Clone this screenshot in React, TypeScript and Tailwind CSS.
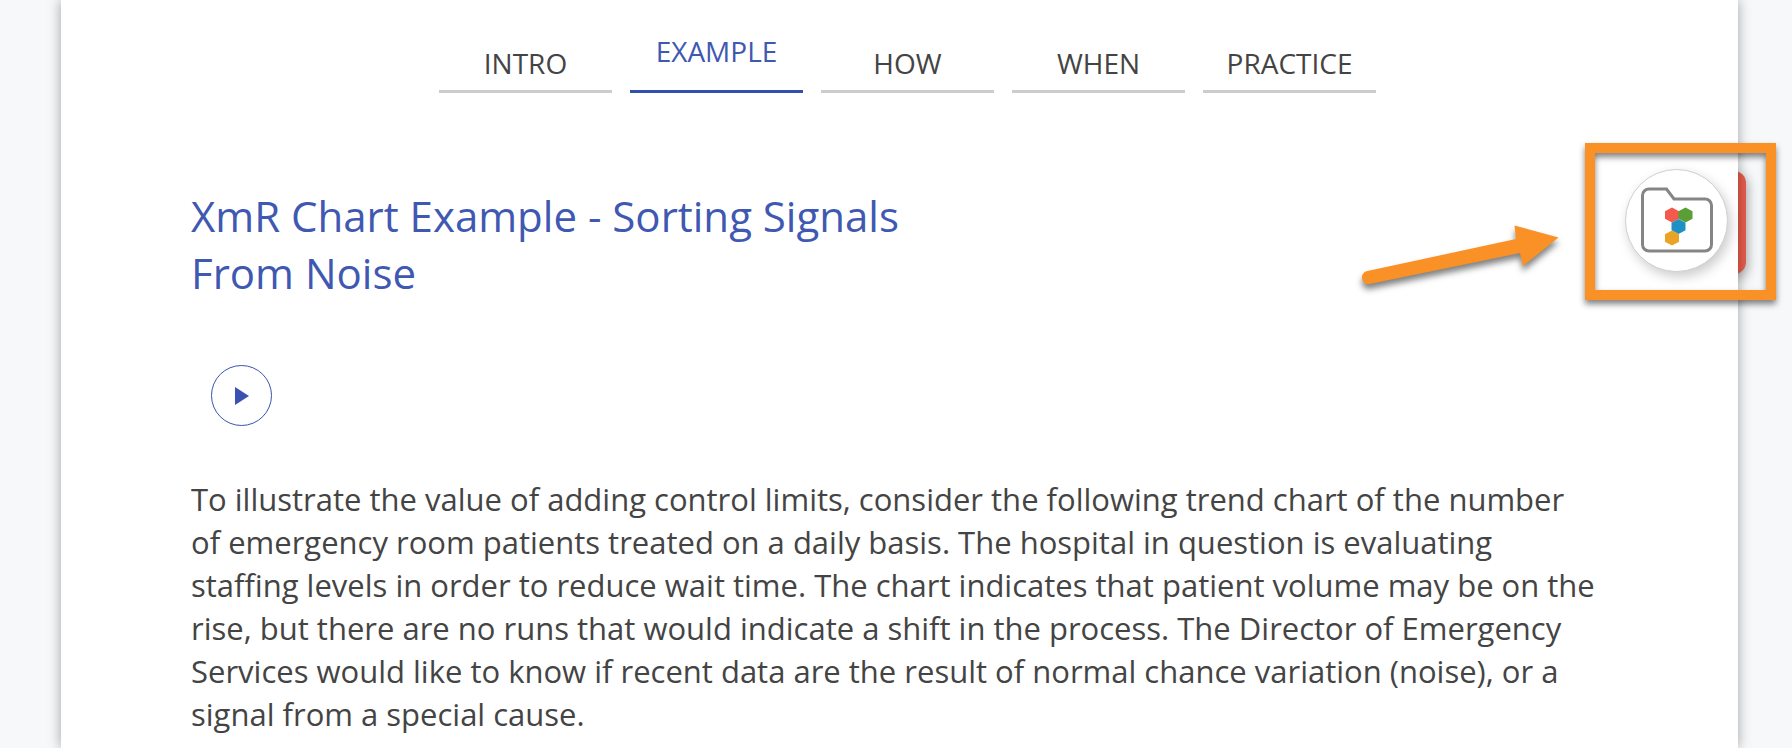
import { clsx } from 'clsx';

const tabs = ['INTRO', 'EXAMPLE', 'HOW', 'WHEN', 'PRACTICE'];

const TabBar = ({ active }: { active: string }) => (
  <nav className="flex justify-center gap-[18px] pl-4 pt-8">
    {tabs.map((tab) => (
      <a
        key={tab}
        href={`#${tab.toLowerCase()}`}
        aria-current={tab === active ? 'page' : undefined}
        className={clsx(
          'flex h-[61px] w-[173px] justify-center border-b-3 text-[28px] leading-9',
          tab === active ? 'items-start border-[#3250ad] pt-px text-[#3f58b2]' : 'items-end border-[#cbcdcb] pb-[9px]'
        )}
      >
        {tab}
      </a>
    ))}
  </nav>
);

const FolderIcon = () => (
  <svg viewBox="0 0 72 66" className="h-[66px] w-[72px]" aria-hidden="true">
    <path
      d="M8 2h17.500l7.500 10h31a6.500 6.500 0 0 1 6.500 6.500v39a6.500 6.500 0 0 1-6.500 6.500h-56a6.500 6.500 0 0 1-6.500-6.500v-49a6.500 6.500 0 0 1 6.500-6.500z"
      fill="none"
      stroke="#858585"
      strokeWidth="3"
    />
    <path d="M31 20.500l7 3.700v7.600l-7 3.700-7-3.700v-7.600z" fill="#f45a4b" />
    <path d="M44.500 20.500l7 3.700v7.600l-7 3.700-7-3.700v-7.600z" fill="#5a9e36" />
    <path d="M37.500 32l7 3.700v7.600l-7 3.700-7-3.700v-7.600z" fill="#1e90c4" />
    <path d="M31 43.500l7 3.700v7.600l-7 3.700-7-3.700v-7.600z" fill="#eaa324" />
  </svg>
);

const App = () => {
  return (
    <div className="relative isolate flex min-h-screen overflow-hidden bg-[#f6f8fa] pl-[61px] pr-[54px] font-['Open_Sans',sans-serif] text-[#444444]">
      {/* Drawer handle tucked behind the page */}
      <div className="absolute right-[46px] top-[171px] -z-10 h-[103px] w-10 rounded-r-xl bg-[#e85c4d] shadow-[2px_4px_12px_rgba(0,0,0,0.3)]" />

      <main className="flex flex-1 flex-col bg-white px-[130px] shadow-[0_0_12px_rgba(0,0,0,0.35)]">
        <TabBar active="EXAMPLE" />

        <h1 className="max-w-3xl pt-[94px] text-[42px] leading-[57px] text-[#3f58b2]">
          XmR Chart Example - Sorting Signals From Noise
        </h1>

        <div className="flex px-5 pb-[52px] pt-16">
          <button
            type="button"
            aria-label="Play"
            className="flex size-[61px] items-center justify-center rounded-full border border-[#3a53b0]"
          >
            <svg viewBox="0 0 14 18" className="h-[18px] w-[14px]" aria-hidden="true">
              <path d="M0 0l14 9-14 9z" fill="#3a53b0" />
            </svg>
          </button>
        </div>

        <p className="pr-2.5 text-[31px] leading-[43px]">
          To illustrate the value of adding control limits, consider the following trend chart of the number of
          emergency room patients treated on a daily basis. The hospital in question is evaluating staffing levels in
          order to reduce wait time. The chart indicates that patient volume may be on the rise, but there are no runs
          that would indicate a shift in the process. The Director of Emergency Services would like to know if recent
          data are the result of normal chance variation (noise), or a signal from a special cause.
        </p>
      </main>

      <button
        type="button"
        aria-label="Open folder"
        className="absolute right-16 top-[169px] flex size-[103px] items-center justify-center rounded-full border border-[#cfcfcf] bg-white pb-0.5 shadow-[3px_5px_12px_rgba(0,0,0,0.2)]"
      >
        <FolderIcon />
      </button>

      {/* Callout frame and arrow */}
      <div className="pointer-events-none absolute right-4 top-[143px] h-[157px] w-[191px] border-10 border-[#f99127] drop-shadow-[0_4px_3px_rgba(0,0,0,0.5)]" />
      <svg
        viewBox="0 0 220 90"
        className="pointer-events-none absolute right-[222px] top-[215px] h-[90px] w-[220px] drop-shadow-[0_5px_3px_rgba(0,0,0,0.5)]"
        aria-hidden="true"
      >
        <path d="M17.500 56 166 24l-1.500-13.500L208.500 22.500 173 51l-3-13L19.500 69a6.500 6.500 0 0 1-2-13z" fill="#f99127" />
      </svg>
    </div>
  );
};

export default App;
